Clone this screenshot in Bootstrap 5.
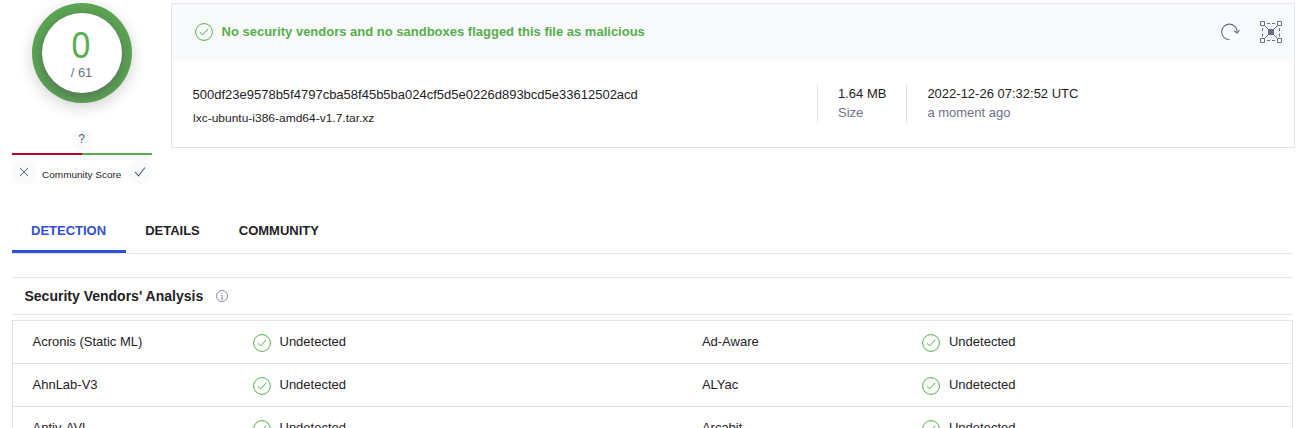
<!DOCTYPE html>
<html lang="en">
<head>
<meta charset="utf-8">
<meta name="viewport" content="width=device-width, initial-scale=1">
<title>File report</title>
<link href="https://cdn.jsdelivr.net/npm/bootstrap@5.3.0/dist/css/bootstrap.min.css" rel="stylesheet">
<style>
  :root { --line: #e2e4ec; --ink: #1f2228; --muted: #6c7287; --green: #56ae4d; --blue: #3250d5; --soft: #f9fafc; }
  body { font-family: "Liberation Sans", Arial, sans-serif; font-size: 13px; line-height: 19px; color: var(--ink); background: #fff; height: 428px; overflow: hidden; }
  svg { display: block; flex: none; }
  .page { padding: 3px 7px 0 12px; height: 428px; overflow: hidden; }
  .score-col { width: 140px; margin-right: 19px; flex: none; }
  .ring { width: 100px; height: 100px; background: #5ba652; box-shadow: 0 4px 15px rgba(0,0,0,.18); overflow: hidden; }
  .ring-face { width: 80px; height: 80px; background: #fff; box-shadow: 0 4px 14px rgba(80,80,90,.65); }
  .ring-num { font-size: 36px; line-height: 36px; color: var(--green); margin: 15px 1px 0 0; transform: scaleX(.94); }
  .ring-total { line-height: 17px; color: var(--muted); margin-right: 1px; }
  .pin { margin-top: 26px; }
  .vote-bar { height: 2px; margin-top: 2px; }
  .vote-bar .neg { background: #b0002c; }
  .vote-bar .pos { background: var(--green); }
  .vote-row { margin-top: 5px; }
  .vote { width: 24px; height: 24px; background: var(--soft); }
  .vote-label { font-size: 9.5px; padding-top: 5px; white-space: nowrap; transform: scaleX(1.05); }
  .summary { height: 145px; border: 1px solid var(--line); border-radius: 0; --bs-card-bg: #fff; }
  .summary-head { height: 56px; background: var(--soft); padding: 0 11px 0 23px; }
  .verdict { color: var(--green); margin: -1px 0 0 8.500px; }
  .graph-icon { margin-left: 19px; }
  .summary-body { padding: 24px 0 0 20.500px; }
  .fname { font-size: 11.5px; margin-top: 5px; transform: scaleX(1.043); transform-origin: 0 50%; }
  .hash { padding-top: 1px; width: 624.500px; }
  .fact { height: 39px; border-left: 1px solid var(--line); padding-left: 20px; }
  .fact-size { width: 89px; }
  .fact-date { padding-left: 20.4px; }
  .muted { color: var(--muted); }
  .tabs { margin-top: 25px; margin-right: 2px; height: 45px; border-bottom: 1px solid var(--line); }
  .tabs .nav-link { color: var(--ink); padding: 12px 0 0; margin-right: 39px; height: 44px; font-weight: 700; border-radius: 0; }
  .tabs .nav-link.active { color: var(--blue); border-bottom: 3px solid var(--blue); padding: 12px 20px 0 19px; margin-right: 19px; }
  .section-title { margin: 23px 2px 5px 0; height: 38px; border-top: 1px solid var(--line); border-bottom: 1px solid var(--line); padding-left: 12.500px; }
  .section-title h2 { font-size: 14px; margin: 0 12.500px 0 0; font-weight: 700; }
  .results { border: 1px solid var(--line); margin-right: 2px; }
  .result { height: 43px; border-bottom: 1px solid var(--line); }
  .result svg { margin-top: 1px; }
  .vendor { width: 220.500px; margin-top: -1px; }
  .status { margin-left: 8.500px; margin-top: -1px; }
  .half-l { width: 669.5px; padding-left: 19.500px; }
  .half-r { padding-left: 19.4px; }
  .half-r .vendor { width: 220.1px; }
  .half-r .status { margin-left: 9px; }
</style>
</head>
<body>
<svg width="0" height="0" class="position-absolute" aria-hidden="true">
  <symbol id="ok" viewBox="0 0 18 18"><circle cx="9" cy="9" r="8.4" fill="none" stroke="#56ae4d" stroke-width="1"/><path d="M4.800 9.2l2.900 2.700 5.500-6.200" fill="none" stroke="#56ae4d" stroke-width="1"/></symbol>
</svg>
<main class="page">
  <div class="d-flex align-items-start">
    <aside class="score-col d-flex flex-column align-items-center">
      <div class="ring rounded-circle d-flex align-items-center justify-content-center">
        <div class="ring-face rounded-circle d-flex flex-column align-items-center">
          <div class="ring-num">0</div>
          <div class="ring-total">/ 61</div>
        </div>
      </div>
      <svg class="pin" width="22" height="22" viewBox="0 0 22 22"><path d="M11 22L3.5 17.5A10.3 10.3 0 1 1 18.5 17.5Z" fill="#f8f9fb"/><text x="10.500" y="14" font-size="12" text-anchor="middle" fill="#5c5f6c">?</text></svg>
      <div class="vote-bar d-flex w-100"><div class="neg w-50"></div><div class="pos w-50"></div></div>
      <div class="vote-row d-flex w-100 justify-content-between">
        <div class="vote rounded-circle d-flex align-items-center justify-content-center"><svg width="24" height="24" viewBox="0 0 24 24"><path d="M8 8l8 8M16 8l-8 8" fill="none" stroke="#565b7a"/></svg></div>
        <div class="vote-label">Community Score</div>
        <div class="vote rounded-circle d-flex align-items-center justify-content-center"><svg width="24" height="24" viewBox="0 0 24 24"><path d="M7 12l3.500 3.800 6.500-8.300" fill="none" stroke="#565b7a" stroke-width="1.100"/></svg></div>
      </div>
    </aside>
    <section class="card summary flex-grow-1">
      <div class="summary-head d-flex align-items-center">
        <svg width="18" height="18"><use href="#ok"/></svg>
        <div class="verdict fw-bold">No security vendors and no sandboxes flagged this file as malicious</div>
        <svg class="ms-auto" width="20" height="18" viewBox="0 0 20 18" fill="none" stroke="#686d8c" stroke-width="1.100"><path d="M9.500 16.700A7.800 7.800 0 1 1 17.200 9.300"/><path d="M14 7.800L17.200 10.300 19.400 7"/></svg>
        <svg class="graph-icon" width="24" height="24" viewBox="0 0 24 24" fill="none" stroke="#686d8c"><path d="M5 5L19 19M19 5L5 19"/><path d="M8 3.500h3M13 3.500h3M8 20.500h3M13 20.500h3M3.500 8v3M3.500 13.500v3M20.500 8v3M20.500 13.500v3"/><path d="M1.500 1.500h4v4h-4zM18.500 1.500h4v4h-4zM1.500 18.500h4v4h-4zM18.500 18.500h4v4h-4z" fill="#fff"/><path d="M9 9h6v6H9z" fill="#686d8c" stroke="none"/></svg>
      </div>
      <div class="summary-body d-flex">
        <div class="hash"><div>500df23e9578b5f4797cba58f45b5ba024cf5d5e0226d893bcd5e33612502acd</div><div class="fname">lxc-ubuntu-i386-amd64-v1.7.tar.xz</div></div>
        <div class="fact fact-size"><div>1.64 MB</div><div class="muted">Size</div></div>
        <div class="fact fact-date"><div>2022-12-26 07:32:52 UTC</div><div class="muted">a moment ago</div></div>
      </div>
    </section>
  </div>
  <nav class="nav tabs">
    <a class="nav-link active" href="#">DETECTION</a>
    <a class="nav-link" href="#">DETAILS</a>
    <a class="nav-link" href="#">COMMUNITY</a>
  </nav>
  <div class="section-title d-flex align-items-center">
    <h2>Security Vendors' Analysis</h2>
    <svg width="12" height="12" viewBox="0 0 12 12"><circle cx="6" cy="6" r="5.500" fill="none" stroke="#8b90a5"/><path d="M6 5v4M6 2.800v1.200M5 5.500h1M4.800 9h2.400" stroke="#8b90a5" stroke-width="1"/></svg>
  </div>
  <div class="results">
    <div class="result d-flex">
      <div class="half-l d-flex align-items-center"><div class="vendor">Acronis (Static ML)</div><svg width="18" height="18"><use href="#ok"/></svg><div class="status">Undetected</div></div>
      <div class="half-r d-flex align-items-center"><div class="vendor">Ad-Aware</div><svg width="18" height="18"><use href="#ok"/></svg><div class="status">Undetected</div></div>
    </div>
    <div class="result d-flex">
      <div class="half-l d-flex align-items-center"><div class="vendor">AhnLab-V3</div><svg width="18" height="18"><use href="#ok"/></svg><div class="status">Undetected</div></div>
      <div class="half-r d-flex align-items-center"><div class="vendor">ALYac</div><svg width="18" height="18"><use href="#ok"/></svg><div class="status">Undetected</div></div>
    </div>
    <div class="result d-flex">
      <div class="half-l d-flex align-items-center"><div class="vendor">Antiy-AVL</div><svg width="18" height="18"><use href="#ok"/></svg><div class="status">Undetected</div></div>
      <div class="half-r d-flex align-items-center"><div class="vendor">Arcabit</div><svg width="18" height="18"><use href="#ok"/></svg><div class="status">Undetected</div></div>
    </div>
  </div>
</main>
<script src="https://cdn.jsdelivr.net/npm/bootstrap@5.3.0/dist/js/bootstrap.bundle.min.js"></script>
</body>
</html>
